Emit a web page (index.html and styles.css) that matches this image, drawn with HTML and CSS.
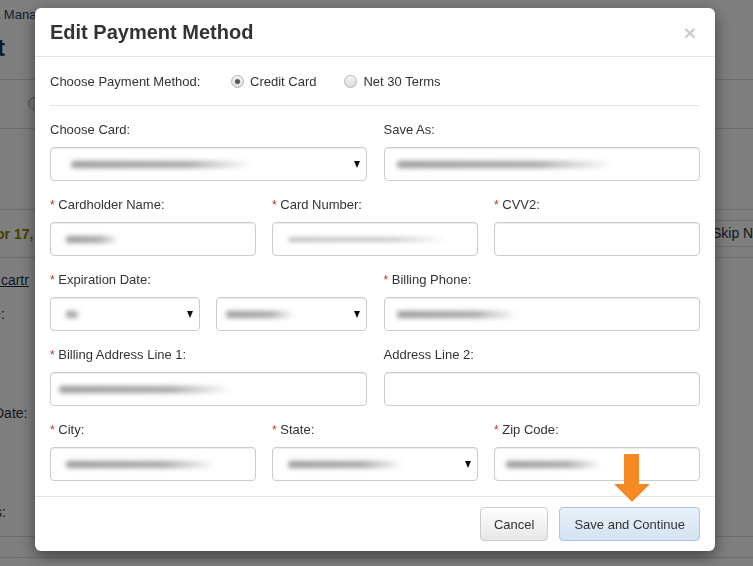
FILE: index.html
```html
<!doctype html>
<html lang="en">

<head>
  <meta charset="UTF-8">
  <title>Edit Payment Method</title>
  <link rel="stylesheet" href="styles.css">
</head>

<body>

  <!-- page behind the dialog -->
  <div class="page">
    <div class="crumbs">a Mana</div>
    <div class="page-title">t</div>
    <div class="pay-row"><span class="bg-radio"></span></div>
    <div class="gap-row"></div>
    <div class="order-row">
      <span class="order-date">or 17, 2</span>
      <span class="skip-btn">Skip N</span>
    </div>
    <div class="link-row"><a>k cartr</a></div>
    <div class="info-row one">ice:</div>
    <div class="info-row two">Date:</div>
    <div class="info-row three">:</div>
    <div class="info-row four">ss:</div>
    <div class="foot-row"></div>
  </div>

  <div class="backdrop"></div>

  <div class="modal">
    <div class="modal-header">
      <h4>Edit Payment Method</h4>
      <span class="close">&times;</span>
    </div>

    <div class="modal-body">
      <div class="method-row">
        <span class="method-label">Choose Payment Method:</span>
        <label class="opt"><span class="radio checked"></span>Credit Card</label>
        <label class="opt"><span class="radio"></span>Net 30 Terms</label>
      </div>

      <hr>

      <div class="grid two">
        <div class="field">
          <label>Choose Card:</label>
          <div class="control select"><span class="blur" style="width:180px;margin-left:8px"></span><i class="caret"></i></div>
        </div>
        <div class="field">
          <label>Save As:</label>
          <div class="control"><span class="blur" style="width:215px"></span></div>
        </div>
      </div>

      <div class="grid three">
        <div class="field">
          <label><span class="req">*</span> Cardholder Name:</label>
          <div class="control"><span class="blur short" style="width:52px;margin-left:3px"></span></div>
        </div>
        <div class="field">
          <label><span class="req">*</span> Card Number:</label>
          <div class="control"><span class="blur thin" style="width:160px;margin-left:3px"></span></div>
        </div>
        <div class="field">
          <label><span class="req">*</span> CVV2:</label>
          <div class="control"></div>
        </div>
      </div>

      <div class="grid two">
        <div class="field">
          <label><span class="req">*</span> Expiration Date:</label>
          <div class="pair">
            <div class="control select"><span class="blur" style="width:14px;margin-left:3px"></span><i class="caret"></i></div>
            <div class="control select"><span class="blur" style="width:68px;margin-left:-3px"></span><i class="caret"></i></div>
          </div>
        </div>
        <div class="field">
          <label><span class="req">*</span> Billing Phone:</label>
          <div class="control"><span class="blur" style="width:120px"></span></div>
        </div>
      </div>

      <div class="grid two">
        <div class="field">
          <label><span class="req">*</span> Billing Address Line 1:</label>
          <div class="control"><span class="blur" style="width:172px;margin-left:-4px"></span></div>
        </div>
        <div class="field">
          <label>Address Line 2:</label>
          <div class="control"></div>
        </div>
      </div>

      <div class="grid three last">
        <div class="field">
          <label><span class="req">*</span> City:</label>
          <div class="control"><span class="blur" style="width:150px;margin-left:3px"></span></div>
        </div>
        <div class="field">
          <label><span class="req">*</span> State:</label>
          <div class="control select"><span class="blur" style="width:115px;margin-left:3px"></span><i class="caret"></i></div>
        </div>
        <div class="field">
          <label><span class="req">*</span> Zip Code:</label>
          <div class="control"><span class="blur" style="width:95px;margin-left:-1px"></span></div>
        </div>
      </div>
    </div>

    <div class="modal-footer">
      <button class="btn">Cancel</button>
      <button class="btn primary">Save and Continue</button>
    </div>
  </div>

  <!-- hint arrow pointing at the save button -->
  <svg class="arrow" width="36" height="48" viewBox="0 0 36 48">
    <path d="M10 0 H25 V30 H36 L18 48 L0 30 H10 Z" fill="#f48a24"/>
  </svg>

</body>

</html>
```

FILE: styles.css
```css
* {
  margin: 0px;
  padding: 0px;
  box-sizing: border-box;
}

body {
  width: 753px;
  height: 566px;
  overflow: hidden;
  font-family: "Liberation Sans", Arial, sans-serif;
  font-size: 13px;
  color: #333;
  background: #fff;
}

/* ---------- page behind ---------- */

.page {
  width: 753px;
  height: 566px;
}

.crumbs {
  height: 30px;
  line-height: 30px;
  margin-left: -7px;
  color: #24466e;
}

.page-title {
  height: 50px;
  padding-top: 4px;
  margin-left: -11px;
  padding-left: 8px;
  font-size: 24px;
  font-weight: bold;
  color: #1a3552;
  border-bottom: 1px solid #ddd;
}

.pay-row {
  height: 49px;
  padding: 17px 0 0 28px;
  border-bottom: 1px solid #ddd;
}

.bg-radio {
  display: block;
  width: 13px;
  height: 13px;
  border-radius: 50%;
  border: 1px solid #999;
  background: #eee;
}

.gap-row {
  height: 81px;
  border-bottom: 1px solid #ddd;
}

.order-row {
  height: 48px;
  display: flex;
  justify-content: space-between;
  align-items: center;
  border-bottom: 1px solid #ddd;
}

.order-date {
  margin-left: -4px;
  font-size: 14px;
  font-weight: bold;
  color: #8f8200;
}

.skip-btn {
  height: 27px;
  line-height: 25px;
  padding-left: 4px;
  width: 45px;
  font-size: 14px;
  overflow: hidden;
  white-space: nowrap;
  border-top: 1px solid #ddd;
  border-bottom: 1px solid #ddd;
  color: #1f2f4a;
}

.link-row {
  height: 48px;
  padding-top: 14px;
  margin-left: -10px;
  font-size: 14px;
}

.link-row a {
  color: #1f2f4a;
  text-decoration: underline;
}

.info-row {
  margin-left: -17px;
  font-size: 14px;
  color: #333;
}

.info-row.one { height: 99px; }
.info-row.two { height: 66px; margin-left: -6px; }
.info-row.three { height: 33px; margin-left: -12px; }
.info-row.four { height: 32px; margin-left: -12px; }

.foot-row {
  height: 22px;
  border-top: 1px solid #ddd;
  border-bottom: 1px solid #ddd;
}

.backdrop {
  position: fixed;
  top: 0;
  left: 0;
  right: 0;
  bottom: 0;
  background: rgba(0, 0, 0, 0.5);
}

/* ---------- dialog ---------- */

.modal {
  position: absolute;
  top: 8px;
  left: 35px;
  width: 680px;
  background: #fff;
  border-radius: 6px;
  box-shadow: 0 5px 15px rgba(0, 0, 0, 0.5);
}

.modal-header {
  display: flex;
  justify-content: space-between;
  align-items: center;
  padding: 14px 15px;
  border-bottom: 1px solid #e5e5e5;
  height: 49px;
}

.modal-header h4 {
  font-size: 20px;
  line-height: 20px;
  font-weight: bold;
  color: #333;
}

.close {
  font-size: 21px;
  font-weight: bold;
  line-height: 20px;
  color: #000;
  opacity: 0.2;
  margin-right: 4px;
  margin-top: 2px;
}

.modal-body {
  padding: 15px;
}

.method-row {
  display: flex;
  align-items: center;
  height: 18px;
}

.method-label {
  width: 181px;
}

.opt {
  display: flex;
  align-items: center;
  margin-right: 28px;
}

.radio {
  width: 13px;
  height: 13px;
  margin-right: 6px;
  border-radius: 50%;
  border: 1px solid #b5b5b5;
  background: linear-gradient(#f4f4f4, #dcdcdc);
  display: flex;
  align-items: center;
  justify-content: center;
}

.radio.checked::after {
  content: "";
  width: 5px;
  height: 5px;
  border-radius: 50%;
  background: #555;
}

hr {
  border: 0;
  border-top: 1px solid #e5e5e5;
  margin: 15px 0 13px;
}

.grid {
  display: grid;
  margin-bottom: 13px;
}

.grid.two {
  grid-template-columns: 1fr 1fr;
  column-gap: 17px;
}

.grid.three {
  grid-template-columns: 1fr 1fr 1fr;
  column-gap: 16px;
}

.grid.last {
  margin-bottom: 0;
}

.field label {
  display: block;
  line-height: 20px;
  padding-top: 1px;
  margin-bottom: 7px;
}

.req {
  color: #c9302c;
  font-size: 12px;
}

.control {
  height: 34px;
  border: 1px solid #ccc;
  border-radius: 4px;
  padding: 0 12px;
  box-shadow: inset 0 1px 1px rgba(0, 0, 0, 0.075);
  display: flex;
  align-items: center;
  background: #fff;
}

.control.select {
  justify-content: space-between;
  padding-right: 6px;
}

.pair {
  display: grid;
  grid-template-columns: 1fr 1fr;
  column-gap: 16px;
}

.caret {
  width: 0;
  height: 0;
  border-left: 3.5px solid transparent;
  border-right: 3.5px solid transparent;
  border-top: 7px solid #111;
}

.blur {
  display: block;
  height: 7px;
  border-radius: 3px;
  background: linear-gradient(to right, #999, #a6a6a6 65%, rgba(180, 180, 180, 0));
  filter: blur(2.5px);
}

.blur.thin {
  height: 3px;
}

/* ---------- footer ---------- */

.modal-footer {
  display: flex;
  justify-content: flex-end;
  gap: 11px;
  padding: 10px 15px;
  border-top: 1px solid #e5e5e5;
}

.btn {
  height: 34px;
  padding: 0 13px;
  font-family: "Liberation Sans", Arial, sans-serif;
  font-size: 13px;
  color: #333;
  border: 1px solid #ccc;
  border-radius: 4px;
  background: linear-gradient(#fff, #e6e6e6);
}

.btn.primary {
  padding: 0 14px;
  border-color: #a9c8e8;
  background: linear-gradient(#e8f0f8, #d4e3f3);
}

.arrow {
  position: absolute;
  left: 614px;
  top: 454px;
}
```
